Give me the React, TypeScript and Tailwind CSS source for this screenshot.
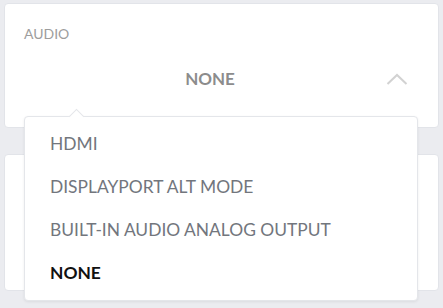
import { useState } from "react";

const options = ["HDMI", "DISPLAYPORT ALT MODE", "BUILT-IN AUDIO ANALOG OUTPUT", "NONE"];

export default function App() {
  const [value] = useState("NONE");

  return (
    <div
      className="relative h-[308px] w-[443px] overflow-hidden bg-[#ebecf0] px-[4px] pt-[3px]"
      style={{ fontFamily: "Lato, 'Open Sans', sans-serif" }}
    >
      <section className="h-[125px] rounded-[4px] border border-[#e2e4e9] bg-white px-[19px] pt-[21px]">
        <p className="text-[14px] leading-[17px] text-[#9d9d9d]">AUDIO</p>
        <div className="mt-[27px] flex items-center">
          <span className="flex-1 pl-[10px] text-center text-[17px] font-bold leading-[20px] text-[#8c8c8c]">
            {value}
          </span>
          <svg width="22" height="12" viewBox="0 0 22 12" className="mr-[11px]" fill="none">
            <path d="M1.5 11 L11 2 L20.5 11" stroke="#d2d2d2" strokeWidth="2" />
          </svg>
        </div>
      </section>

      <section className="mt-[26px] h-[137px] rounded-[4px] border border-[#e2e4e9] bg-white" />

      <div className="absolute left-[24px] top-[116px] w-[394px] rounded-[4px] border border-[#e4e6ea] bg-white pb-[5px] pt-[6px] shadow-[0_1px_3px_rgba(0,0,0,0.07)]">
        <div className="absolute -top-[6px] left-[46px] h-[11px] w-[11px] rotate-45 border-l border-t border-[#e4e6ea] bg-white" />
        <ul className="relative">
          {options.map((o) => (
            <li
              key={o}
              className={`flex h-[43px] items-center px-[25px] text-[17.4px] ${
                o === value ? "font-bold text-[#111]" : "text-[#72767d]"
              }`}
            >
              {o}
            </li>
          ))}
        </ul>
      </div>
    </div>
  );
}
